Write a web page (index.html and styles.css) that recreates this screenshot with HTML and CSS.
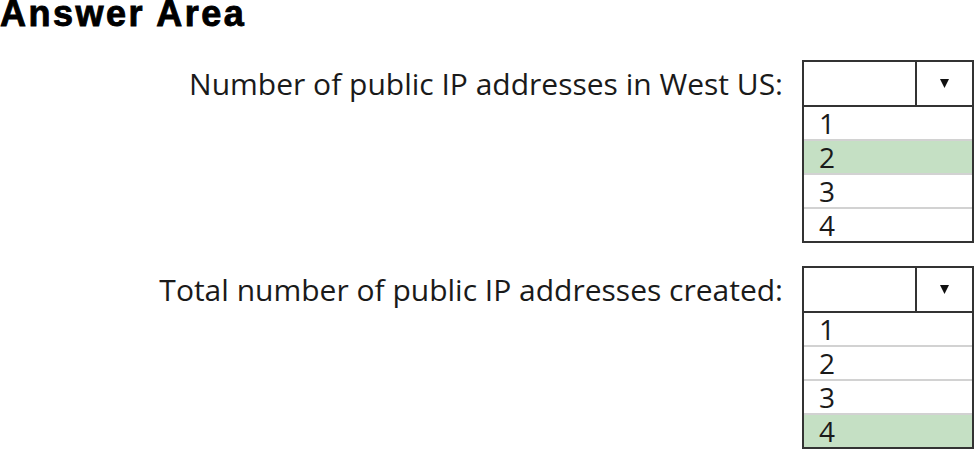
FILE: index.html
```html
<!DOCTYPE html>
<html lang="en">
<head>
  <meta charset="UTF-8">
  <title>Answer Area</title>
  <link rel="stylesheet" href="styles.css">
</head>
<body>
  <h1 class="title">Answer Area</h1>

  <div class="answer">
    <div class="question">
      <div class="label">Number of public IP addresses in West US:</div>
      <div class="dropdown">
        <div class="dd-head">
          <span class="dd-value"></span>
          <span class="dd-arrow">
            <svg width="9" height="9" viewBox="0 0 9 9"><polygon points="0,0 9,0 4.5,9" fill="#111"/></svg>
          </span>
        </div>
        <ul class="dd-list">
          <li>1</li>
          <li class="selected">2</li>
          <li>3</li>
          <li>4</li>
        </ul>
      </div>
    </div>

    <div class="question">
      <div class="label">Total number of public IP addresses created:</div>
      <div class="dropdown">
        <div class="dd-head">
          <span class="dd-value"></span>
          <span class="dd-arrow">
            <svg width="9" height="9" viewBox="0 0 9 9"><polygon points="0,0 9,0 4.5,9" fill="#111"/></svg>
          </span>
        </div>
        <ul class="dd-list">
          <li>1</li>
          <li>2</li>
          <li>3</li>
          <li class="selected">4</li>
        </ul>
      </div>
    </div>
  </div>
</body>
</html>
```

FILE: styles.css
```css
body {
  margin: 0;
  background-color: #fff;
  color: #1a1a1a;
  font-family: "Open Sans", "Noto Sans", sans-serif;
}

.title {
  margin: -4px 0 0 0;
  font-family: "Liberation Sans", Arial, sans-serif;
  font-size: 36px;
  font-weight: bold;
  line-height: 36px;
  letter-spacing: 2.5px;
  -webkit-text-stroke: 0.9px #000;
  color: #000;
}

.answer {
  display: flex;
  flex-direction: column;
  gap: 23px;
  margin-top: 28px;
}

.question {
  display: grid;
  grid-template-columns: 1fr 172px;
  column-gap: 19px;
  padding-right: 1px;
}

.label {
  height: 47px;
  display: flex;
  align-items: center;
  justify-content: flex-end;
  font-size: 30px;
}

.dropdown {
  border: 2px solid #333;
}

.dd-head {
  display: flex;
  height: 43px;
  border-bottom: 2px solid #333;
}

.dd-value {
  flex: 1;
}

.dd-arrow {
  width: 55px;
  border-left: 2px solid #333;
  display: flex;
  align-items: center;
  justify-content: center;
}

.dd-list {
  list-style: none;
  margin: 0;
  padding: 0;
}

.dd-list li {
  height: 32px;
  padding-left: 15px;
  font-size: 28px;
  line-height: 32px;
  border-top: 2px solid #d2d2d2;
}

.dd-list li:first-child {
  border-top: none;
}

.dd-list li.selected {
  background-color: #c5e0c4;
}
```
